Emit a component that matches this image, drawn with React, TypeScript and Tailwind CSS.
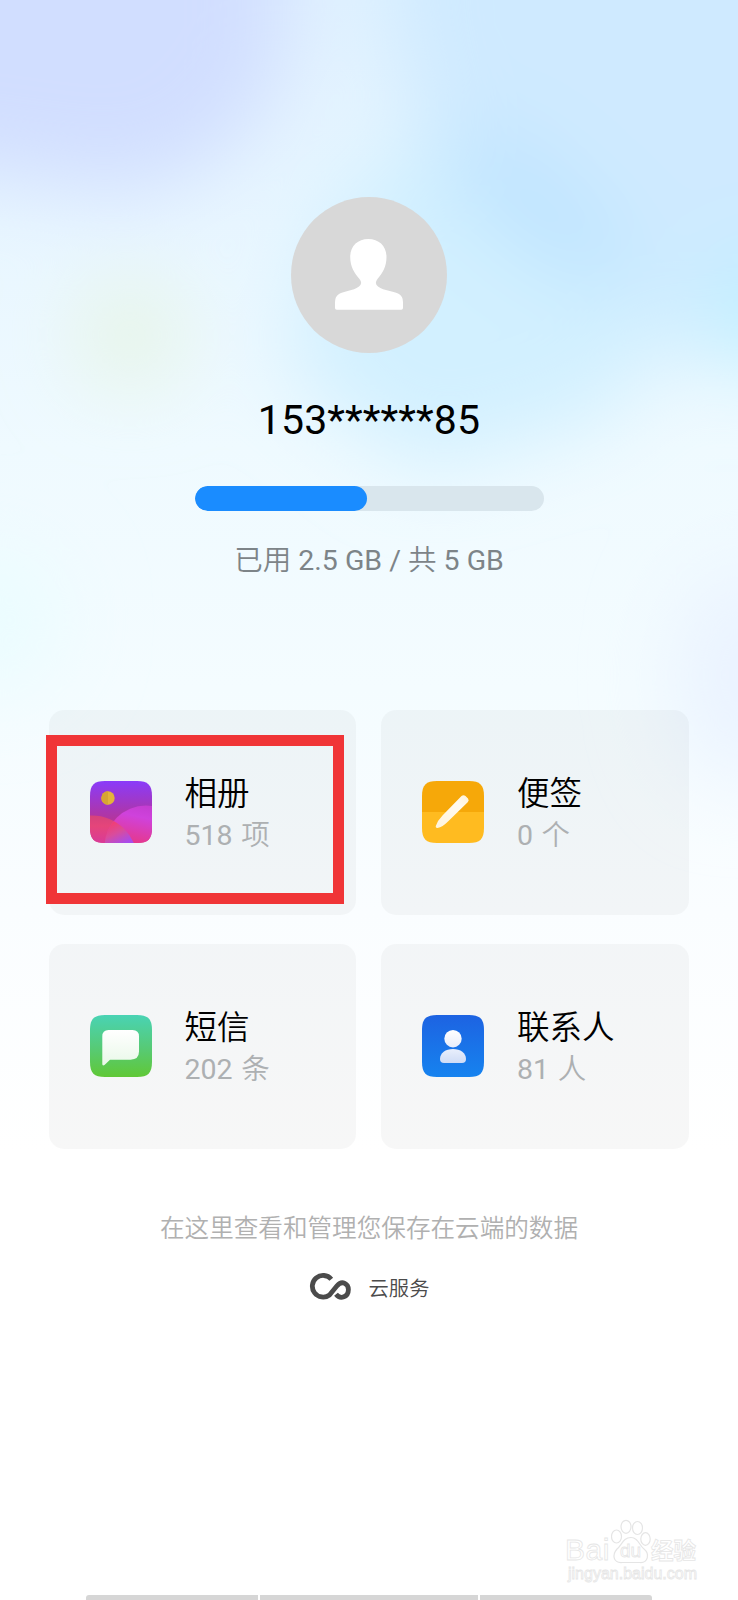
import * as React from 'react';

const AlbumIcon = () => (
  <svg viewBox="0 0 62 62" className="size-[62px] shrink-0">
    <defs>
      <linearGradient id="album-bg" x1="0" y1="0" x2="0" y2="1">
        <stop offset="0" stopColor="#8a3bfa" />
        <stop offset="0.6" stopColor="#b2359f" />
        <stop offset="1" stopColor="#d93a86" />
      </linearGradient>
      <linearGradient id="album-right" gradientUnits="userSpaceOnUse" x1="50" y1="24" x2="42" y2="62">
        <stop offset="0" stopColor="#c53dd2" />
        <stop offset="0.3" stopColor="#cf42dc" />
        <stop offset="1" stopColor="#e6388a" />
      </linearGradient>
      <linearGradient id="album-left" gradientUnits="userSpaceOnUse" x1="8" y1="34" x2="8" y2="62">
        <stop offset="0" stopColor="#d5427c" />
        <stop offset="0.4" stopColor="#e5457a" />
        <stop offset="1" stopColor="#d93a98" />
      </linearGradient>
      <linearGradient id="album-mix" gradientUnits="userSpaceOnUse" x1="24" y1="39" x2="35" y2="62">
        <stop offset="0" stopColor="#f53d6c" />
        <stop offset="0.5" stopColor="#d94c9c" />
        <stop offset="1" stopColor="#a94bea" />
      </linearGradient>
      <clipPath id="album-clip">
        <path d="M0 15C0 4 4 0 15 0H47C58 0 62 4 62 15V47C62 58 58 62 47 62H15C4 62 0 58 0 47Z" />
      </clipPath>
      <clipPath id="album-hill">
        <circle cx="2" cy="80" r="45.500" />
      </clipPath>
    </defs>
    <g clipPath="url(#album-clip)">
      <path d="M0 0H62V62H0Z" fill="url(#album-bg)" />
      <circle cx="2" cy="80" r="45.500" fill="url(#album-left)" />
      <circle cx="56" cy="66" r="41.500" fill="url(#album-right)" />
      <g clipPath="url(#album-hill)">
        <circle cx="56" cy="66" r="41.500" fill="url(#album-mix)" />
      </g>
      <circle cx="18" cy="17" r="6.700" fill="#e4b43a" />
      <path d="M18 10.300A6.700 6.700 0 0 0 18 23.700Z" fill="#d7a533" />
    </g>
  </svg>
);

const NoteIcon = () => (
  <svg viewBox="0 0 62 62" className="size-[62px] shrink-0">
    <defs>
      <linearGradient id="note-pen" x1="1" y1="0" x2="0" y2="1">
        <stop offset="0" stopColor="#fff2d6" />
        <stop offset="0.3" stopColor="#fffaf0" />
        <stop offset="1" stopColor="#fff4dc" />
      </linearGradient>
      <clipPath id="note-clip">
        <path d="M0 15C0 4 4 0 15 0H47C58 0 62 4 62 15V47C62 58 58 62 47 62H15C4 62 0 58 0 47Z" />
      </clipPath>
    </defs>
    <g clipPath="url(#note-clip)">
      <path d="M0 0H62V31H0Z" fill="#f6a809" />
      <path d="M0 31H62V62H0Z" fill="#ffbb20" />
    </g>
    <path
      d="M39.500 15Q41.500 13.300 43.500 15L46 17.500Q47.500 19.500 45.700 21.300L26 40.500Q20.500 46 15.500 47Q13.500 47.200 13.700 45.300Q15.500 39.500 20.500 34.500Z"
      fill="url(#note-pen)"
    />
  </svg>
);

const MessageIcon = () => (
  <svg viewBox="0 0 62 62" className="size-[62px] shrink-0">
    <defs>
      <linearGradient id="sms-bg" x1="0" y1="0" x2="0" y2="1">
        <stop offset="0" stopColor="#49d3b4" />
        <stop offset="0.550" stopColor="#57ca74" />
        <stop offset="1" stopColor="#60c836" />
      </linearGradient>
      <linearGradient id="sms-bubble" x1="0" y1="0" x2="0" y2="1">
        <stop offset="0" stopColor="#ffffff" />
        <stop offset="1" stopColor="#e9f8e8" />
      </linearGradient>
    </defs>
    <path
      d="M0 15C0 4 4 0 15 0H47C58 0 62 4 62 15V47C62 58 58 62 47 62H15C4 62 0 58 0 47Z"
      fill="url(#sms-bg)"
    />
    <path
      d="M12.300 21.500Q12.300 15 18.500 15H42.500Q49 15 49 21.500V36.500Q49 44.500 40.500 44.700H20L14.500 50Q12.300 51.300 12.300 49Z"
      fill="url(#sms-bubble)"
    />
  </svg>
);

const ContactIcon = () => (
  <svg viewBox="0 0 62 62" className="size-[62px] shrink-0">
    <defs>
      <linearGradient id="contact-bg" x1="0" y1="0" x2="0" y2="1">
        <stop offset="0" stopColor="#1d63e2" />
        <stop offset="1" stopColor="#1683ef" />
      </linearGradient>
      <linearGradient id="contact-head" x1="0" y1="0" x2="0" y2="1">
        <stop offset="0" stopColor="#ffffff" />
        <stop offset="1" stopColor="#e8edfb" />
      </linearGradient>
      <linearGradient id="contact-body" x1="0" y1="0" x2="0" y2="1">
        <stop offset="0" stopColor="#e9effc" />
        <stop offset="1" stopColor="#cfdcf6" />
      </linearGradient>
    </defs>
    <path
      d="M0 15C0 4 4 0 15 0H47C58 0 62 4 62 15V47C62 58 58 62 47 62H15C4 62 0 58 0 47Z"
      fill="url(#contact-bg)"
    />
    <circle cx="31" cy="23.700" r="8.700" fill="url(#contact-head)" />
    <path
      d="M18 44C18 38 23.500 34 31 34S44 38 44 44Q44 48 40 48H22Q18 48 18 44Z"
      fill="url(#contact-body)"
    />
  </svg>
);

const items = [
  { name: '相册', count: 518, unit: '项', Icon: AlbumIcon, marked: true },
  { name: '便签', count: 0, unit: '个', Icon: NoteIcon },
  { name: '短信', count: 202, unit: '条', Icon: MessageIcon },
  { name: '联系人', count: 81, unit: '人', Icon: ContactIcon },
];

const Backdrop = () => (
  <svg
    viewBox="0 0 738 1600"
    className="absolute inset-0 -z-10 h-[1600px] w-[738px]"
    aria-hidden="true"
  >
    <defs>
      <linearGradient id="sky" x1="0" y1="0" x2="0" y2="1">
        <stop offset="0" stopColor="#e1f2ff" />
        <stop offset="0.280" stopColor="#effaff" />
        <stop offset="0.430" stopColor="#f4fcff" />
        <stop offset="0.570" stopColor="#fafdff" />
        <stop offset="0.720" stopColor="#ffffff" />
      </linearGradient>
      <filter id="soft" x="-100%" y="-100%" width="300%" height="300%">
        <feGaussianBlur stdDeviation="42" />
      </filter>
    </defs>
    <path d="M0 0H738V1600H0Z" fill="url(#sky)" />
    <g filter="url(#soft)">
      <path d="M-150 -150H285V60Q240 178 120 192L-150 155Z" fill="#d1deff" />
      <path d="M390 -150H900V350H680Q480 240 395 60Z" fill="#cfeaff" />
      <path d="M330 200L440 120L600 180L690 320L600 420L420 470L285 370Z" fill="#d2f0ff" />
      <ellipse cx="540" cy="210" rx="120" ry="38" transform="rotate(38 540 210)" fill="#bce2ff" />
      <ellipse cx="765" cy="310" rx="55" ry="60" fill="#bff0ff" />
      <circle cx="130" cy="335" r="50" fill="#e6f4e2" />
      <circle cx="-10" cy="620" r="70" fill="#eafdff" />
      <ellipse cx="745" cy="675" rx="70" ry="110" fill="#eaf3ff" />
    </g>
  </svg>
);

const Watermark = () => (
  <div className="absolute top-[1518px] left-[565px] w-[134px] text-white [-webkit-text-stroke:0.8px_#e6e6e6]">
    <div className="flex h-[46px] items-end">
      <span className="w-[46px] text-[30px] leading-[28px] tracking-[0.5px] [font-family:'Liberation_Sans',sans-serif]">
        Bai
      </span>
      <div className="relative h-[46px] w-[40px]">
        <svg viewBox="0 0 40 46" className="h-[46px] w-[40px]" fill="#fff" stroke="#e5e5e5" strokeWidth="1.200">
          <ellipse cx="5.500" cy="18.500" rx="5" ry="6.500" />
          <ellipse cx="15" cy="8.800" rx="5" ry="6.500" />
          <ellipse cx="26.500" cy="10" rx="5" ry="6.500" />
          <ellipse cx="34.500" cy="21" rx="4.700" ry="6.300" />
          <path d="M20 19.500C27 19.500 28 27 33 31C39 36 37 45 29 44.500H11C2 45 1 37 6 31C11 27 12 19.500 20 19.500Z" />
        </svg>
        <span className="absolute top-[23px] left-[9px] text-[19px] leading-[20px] [font-family:'Liberation_Sans',sans-serif]">
          du
        </span>
      </div>
      <span className="pb-[2px] text-[22.500px] leading-[25px] font-bold [font-family:'Noto_Sans_CJK_SC',sans-serif]">
        经验
      </span>
    </div>
    <p className="mt-[1px] ml-[3px] text-[16px] leading-[18px] whitespace-nowrap [font-family:'Liberation_Sans',sans-serif]">
      jingyan.baidu.com
    </p>
  </div>
);

export default function App() {
  return (
    <React.Fragment>
      <main className="relative isolate flex h-[1600px] w-[738px] flex-col items-center overflow-hidden pt-[197px] [font-family:Roboto,'Noto_Sans_CJK_SC',sans-serif]">
        <Backdrop />
        <div className="size-[156px] rounded-full bg-[#d8d8d8]">
          <svg viewBox="0 0 156 156" className="size-full" fill="#fff">
            <path d="M77.300 42C88 42 95.500 49 95.500 60C95.500 70 91.500 76 86.500 82Q83 86.500 87 89.500C93 94 103 94 108 97Q112 99.500 112 105V111Q112 112.700 110.300 112.700H45.700Q44 112.700 44 111V105Q44 99.500 48 97C53 94 62 94 68 89.500Q72 86.500 68.500 82C63.500 76 59.200 70 59.200 60C59.200 49 66.700 42 77.300 42Z" />
          </svg>
        </div>
        <h1 className="mt-[43px] text-[41px] leading-[48px] tracking-[0.1px] text-black">
          153******85
        </h1>
        <div className="mt-[42px] h-[25px] w-[349px] overflow-hidden rounded-full bg-[#d9e6ed]">
          <div className="h-full w-[172px] rounded-full bg-[#1a8cff]" />
        </div>
        <p className="mt-[30px] text-[28.500px] leading-[40px] text-[#7d8488]">
          <span className="font-[350]">已用</span> 2.5 GB /{' '}
          <span className="font-[350]">共</span> 5 GB
        </p>
        <section className="mt-[129px] -ml-[1px] grid w-[640px] grid-cols-2 gap-x-[25px] gap-y-[29px]">
          {items.map(({ name, count, unit, Icon, marked }) => (
            <div
              key={name}
              className="relative flex h-[205px] items-center gap-[33px] rounded-[15px] bg-black/[0.03] pb-[1px] pl-[41px]"
            >
              <Icon />
              <div className="pt-[6px]">
                <h2 className="text-[32.500px] leading-[42px] font-[350] text-black">
                  {name}
                </h2>
                <p className="text-[28.500px] leading-[42px] text-[#adb0b2] [word-spacing:1.5px]">
                  {count} <span className="font-[350]">{unit}</span>
                </p>
              </div>
              {marked && (
                <span className="absolute top-[25px] -left-[3px] h-[169px] w-[298px] border-[11px] border-[#f03537]" />
              )}
            </div>
          ))}
        </section>
        <p className="mt-[62px] text-[24.600px] leading-[36px] font-[350] text-[#b0b0b0]">
          在这里查看和管理您保存在云端的数据
        </p>
        <div className="mt-[25px] flex items-center gap-[18px]">
          <svg viewBox="0 0 42 28" className="mb-[1px] h-[28px] w-[42px]" fill="none" stroke="#4b4b4b" strokeWidth="4.800">
            <path d="M22.300 6.200A10.800 10.800 0 1 0 20.500 22L28 12.800C33.500 6.500 39.400 11.500 39.400 16.500C39.400 24 31.500 27 27 21.300" />
          </svg>
          <span className="pt-[3px] text-[20.300px] leading-[28px] font-[350] text-[#4b4b4b]">云服务</span>
        </div>
        <Watermark />
        <div className="mt-auto flex h-[5px] w-[566px] gap-[2px] overflow-hidden rounded-t-[3px]">
          <div className="w-[172px] bg-[#d6d6d6]" />
          <div className="w-[218px] bg-[#d6d6d6]" />
          <div className="flex-1 bg-[#d6d6d6]" />
        </div>
      </main>
    </React.Fragment>
  );
}
